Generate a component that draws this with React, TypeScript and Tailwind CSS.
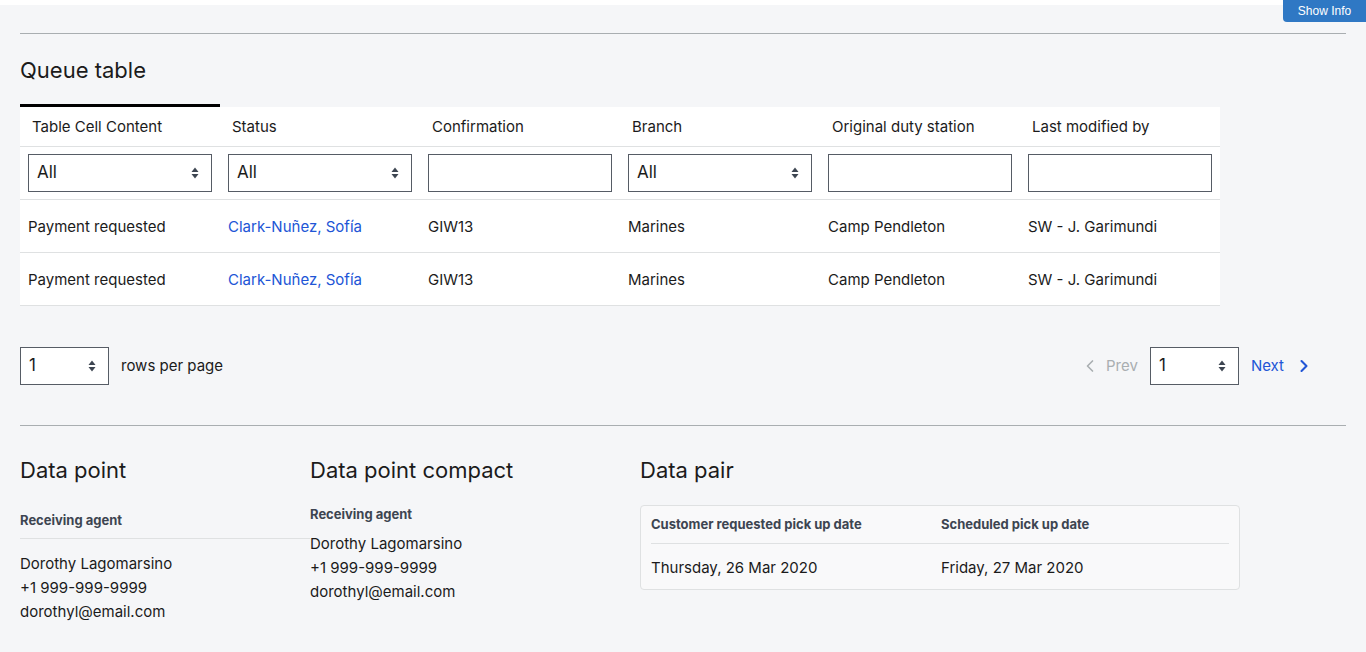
import { ChevronLeft, ChevronRight } from "lucide-react";

const columns = [
  "Table Cell Content",
  "Status",
  "Confirmation",
  "Branch",
  "Original duty station",
  "Last modified by",
];

const filters: ("select" | "input")[] = ["select", "select", "input", "select", "input", "input"];

const rows = [
  ["Payment requested", "Clark-Nuñez, Sofía", "GIW13", "Marines", "Camp Pendleton", "SW - J. Garimundi"],
  ["Payment requested", "Clark-Nuñez, Sofía", "GIW13", "Marines", "Camp Pendleton", "SW - J. Garimundi"],
];

function Arrows() {
  return (
    <svg width="8" height="12" viewBox="0 0 8 12" className="shrink-0">
      <path d="M4 0.5 L7.5 5 H0.5 Z" fill="#3d4551" />
      <path d="M4 11.5 L7.5 7 H0.5 Z" fill="#3d4551" />
    </svg>
  );
}

function SelectBox({ value, className }: { value: string; className: string }) {
  return (
    <div
      className={`flex h-[38px] items-center justify-between border border-[#565c65] bg-white pl-2 pr-3 text-[17px] text-[#1b1b1b] ${className}`}
    >
      <span>{value}</span>
      <Arrows />
    </div>
  );
}

function AgentInfo() {
  return (
    <div className="text-[15px] leading-6 text-[#1b1b1b]">
      <p>Dorothy Lagomarsino</p>
      <p>+1 999-999-9999</p>
      <p>dorothyl@email.com</p>
    </div>
  );
}

export default function App() {
  return (
    <div
      className="relative min-h-[652px] bg-[#f5f6f8] text-[#1b1b1b]"
      style={{ fontFamily: "Inter, 'Open Sans', sans-serif" }}
    >
      <div className="h-[5px] bg-white" />
      <button
        className="absolute right-0 top-0 h-[22px] w-[83px] rounded-bl-[4px] bg-[#2f78c4] text-[12px] text-white"
        style={{ fontFamily: "'Liberation Sans', Arial, sans-serif" }}
      >
        Show Info
      </button>

      <div className="px-5">
        <div className="mt-[28px] border-t border-[#a9aeb1]" />

        <h2 className="mt-[22px] text-[22px] leading-[28px]">Queue table</h2>

        <div className="mt-[20px] w-[1200px]">
          <div className="h-[3px] w-[200px] bg-black" />
          <div className="bg-white">
            <div className="grid h-10 grid-cols-6 border-b border-[#dfe1e2]">
              {columns.map((c) => (
                <div key={c} className="flex items-center pl-3 pt-[1px] text-[15px]">
                  {c}
                </div>
              ))}
            </div>
            <div className="grid h-[53px] grid-cols-6 items-center border-b border-[#dfe1e2] pb-[1px]">
              {filters.map((f, i) =>
                f === "select" ? (
                  <div key={i} className="px-2">
                    <SelectBox value="All" className="w-[184px]" />
                  </div>
                ) : (
                  <div key={i} className="px-2">
                    <div className="h-[38px] w-[184px] border border-[#565c65] bg-white" />
                  </div>
                )
              )}
            </div>
            {rows.map((r, ri) => (
              <div key={ri} className="grid h-[53px] grid-cols-6 items-center border-b border-[#dfe1e2] pt-[2px] text-[15px]">
                {r.map((cell, ci) => (
                  <div key={ci} className={`pl-2 ${ci === 1 ? "text-[#2155d6]" : ""}`}>
                    {cell}
                  </div>
                ))}
              </div>
            ))}
          </div>
        </div>

        <div className="mt-[41px] flex items-center justify-between">
          <div className="flex items-center gap-3">
            <SelectBox value="1" className="w-[89px]" />
            <span className="text-[15px]">rows per page</span>
          </div>
          <div className="mr-[32px] flex items-center">
            <span className="flex items-center text-[15px] text-[#a9aeb1]">
              <ChevronLeft size={20} strokeWidth={2} className="mr-[6px]" />
              Prev
            </span>
            <SelectBox value="1" className="ml-3 w-[89px]" />
            <span className="ml-3 flex items-center text-[15px] text-[#2155d6]">
              Next
              <ChevronRight size={20} strokeWidth={2.5} className="ml-[10px]" />
            </span>
          </div>
        </div>

        <div className="mt-[40px] border-t border-[#a9aeb1]" />

        <div className="mt-[30px] flex">
          <div className="w-[290px]">
            <h3 className="text-[22px] leading-7">Data point</h3>
            <p className="mt-[27px] border-b border-[#dfe1e2] pb-[7px] text-[13px] font-bold text-[#3d4551]">
              Receiving agent
            </p>
            <div className="mt-[13px]">
              <AgentInfo />
            </div>
          </div>
          <div className="w-[330px]">
            <h3 className="text-[22px] leading-7">Data point compact</h3>
            <p className="mt-[21px] text-[13px] font-bold text-[#3d4551]">Receiving agent</p>
            <div className="mt-[7px]">
              <AgentInfo />
            </div>
          </div>
          <div>
            <h3 className="text-[22px] leading-7">Data pair</h3>
            <div className="mt-[21px] w-[600px] rounded-[4px] border border-[#dfe1e2] bg-[#f9f9fa] px-[10px]">
              <div className="grid grid-cols-[290px_1fr] border-b border-[#dfe1e2] pb-[8px] pt-[9px] text-[13px] font-bold text-[#3d4551]">
                <span>Customer requested pick up date</span>
                <span>Scheduled pick up date</span>
              </div>
              <div className="grid grid-cols-[290px_1fr] pb-[10px] pt-[13px] text-[15px]">
                <span>Thursday, 26 Mar 2020</span>
                <span>Friday, 27 Mar 2020</span>
              </div>
            </div>
          </div>
        </div>
      </div>
    </div>
  );
}
